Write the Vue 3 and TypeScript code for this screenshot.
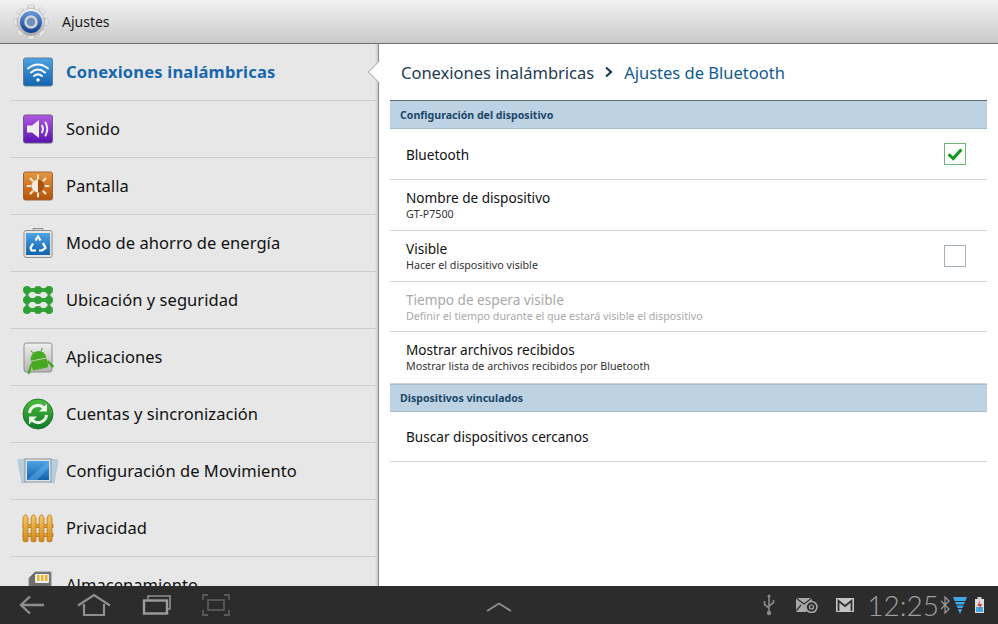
<script setup lang="ts">
const menuItems = [
  { label: "Conexiones inalámbricas", icon: "wifi" },
  { label: "Sonido", icon: "sound" },
  { label: "Pantalla", icon: "display" },
  { label: "Modo de ahorro de energía", icon: "power" },
  { label: "Ubicación y seguridad", icon: "location" },
  { label: "Aplicaciones", icon: "apps" },
  { label: "Cuentas y sincronización", icon: "sync" },
  { label: "Configuración de Movimiento", icon: "motion" },
  { label: "Privacidad", icon: "privacy" },
  { label: "Almacenamiento", icon: "storage" }
];

const deviceRows = [
  { title: "Bluetooth", check: "on", mod: "row--single" },
  { title: "Nombre de dispositivo", sub: "GT-P7500" },
  { title: "Visible", sub: "Hacer el dispositivo visible", check: "off" },
  { title: "Tiempo de espera visible", sub: "Definir el tiempo durante el que estará visible el dispositivo", disabled: true, mod: "row--tight" },
  { title: "Mostrar archivos recibidos", sub: "Mostrar lista de archivos recibidos por Bluetooth", mod: "row--tall" }
];
</script>

<template>
  <div class="screen">
    <header class="title-bar">
      <svg class="gear" viewBox="0 0 36 36" width="36" height="36">
        <defs>
          <linearGradient id="gearMetal" x1="0" y1="0" x2="0" y2="1">
            <stop offset="0" stop-color="#f8f8f8" />
            <stop offset="1" stop-color="#a8a8a8" />
          </linearGradient>
          <linearGradient id="gearBlue" x1="0" y1="0" x2="0" y2="1">
            <stop offset="0" stop-color="#6a9ade" />
            <stop offset="1" stop-color="#123f8e" />
          </linearGradient>
        </defs>
        <g fill="url(#gearMetal)" stroke="#a8a8a8" stroke-width="0.5">
          <rect v-for="a in [0, 45, 90, 135, 180, 225, 270, 315]" :key="a" x="14.500" y="1" width="7" height="7" rx="1" :transform="`rotate(${a} 18 18)`" />
          <circle cx="18" cy="18" r="13.500" />
        </g>
        <circle cx="18" cy="18" r="11" fill="url(#gearBlue)" />
        <circle cx="18" cy="18" r="5.500" fill="#6f8fbc" stroke="#d2d2d2" stroke-width="2.600" />
      </svg>
      <span class="title-text">Ajustes</span>
    </header>

    <main class="content">
      <nav class="sidebar">
        <div v-for="(item, i) in menuItems" :key="item.label" class="menu-row" :class="{ 'menu-row--active': i === 0 }">
          <span class="menu-icon">
            <svg viewBox="0 0 32 32" width="32" height="32">
              <defs>
                <linearGradient id="gBlue" x1="0" y1="0" x2="0" y2="1"><stop offset="0" stop-color="#4ea3e3" /><stop offset="1" stop-color="#1463ad" /></linearGradient>
                <linearGradient id="gPurple" x1="0" y1="0" x2="0" y2="1"><stop offset="0" stop-color="#b05ae0" /><stop offset="1" stop-color="#5a12b0" /></linearGradient>
                <linearGradient id="gOrange" x1="0" y1="0" x2="0" y2="1"><stop offset="0" stop-color="#e8973f" /><stop offset="1" stop-color="#b4520c" /></linearGradient>
                <linearGradient id="gGreen" x1="0" y1="0" x2="0" y2="1"><stop offset="0" stop-color="#4dbb3c" /><stop offset="1" stop-color="#107a28" /></linearGradient>
                <linearGradient id="gGray" x1="0" y1="0" x2="0" y2="1"><stop offset="0" stop-color="#f0f0f0" /><stop offset="1" stop-color="#b4b4b4" /></linearGradient>
                <linearGradient id="gGold" x1="0" y1="0" x2="0" y2="1"><stop offset="0" stop-color="#f5c964" /><stop offset="1" stop-color="#d58a1c" /></linearGradient>
              </defs>

              <g v-if="item.icon === 'wifi'">
                <rect x="1.500" y="2" width="29" height="28" rx="2" fill="url(#gBlue)" stroke="#5d7f9c" />
                <g fill="none" stroke="#fff" stroke-width="2" stroke-linecap="round">
                  <path d="M6 12.500Q16 4.500 26 12.500" />
                  <path d="M9 16.500Q16 10.500 23 16.500" />
                  <path d="M12 20Q16 16.800 20 20" />
                </g>
                <circle cx="16" cy="24" r="1.700" fill="#fff" />
              </g>

              <g v-else-if="item.icon === 'sound'">
                <rect x="1.500" y="2" width="29" height="28" rx="2" fill="url(#gPurple)" stroke="#6f5a8c" />
                <path d="M5 12.500h5L17 7v18l-7-5.500H5z" fill="#eee" />
                <g fill="none" stroke="#eee" stroke-width="2" stroke-linecap="round">
                  <path d="M20 12.500q2 3.500 0 7" />
                  <path d="M23.500 9.500q3.500 6.500 0 13" />
                </g>
              </g>

              <g v-else-if="item.icon === 'display'">
                <rect x="1.500" y="2" width="29" height="28" rx="2" fill="url(#gOrange)" stroke="#94643a" />
                <g stroke="#f4eadc" stroke-width="2" stroke-linecap="round">
                  <path d="M16 5.500v3M16 23.500v3M5.500 16h3M23.500 16h3M8.500 8.500l2.200 2.200M21.300 21.300l2.200 2.200M23.500 8.500l-2.200 2.200M10.700 21.300l-2.200 2.200" />
                </g>
                <circle cx="16" cy="16" r="6.500" fill="#f4eadc" />
                <path d="M16 9.500a6.500 6.500 0 0 1 0 13z" fill="#a8520f" />
              </g>

              <g v-else-if="item.icon === 'power'">
                <path d="M11 3.500V1.500h10v2" fill="#d8d8d8" stroke="#8f8f8f" />
                <rect x="2" y="3.500" width="28" height="27" rx="2" fill="#e4e4e4" stroke="#8f8f8f" />
                <rect x="4" y="6" width="24" height="22" fill="url(#gBlue)" />
                <g fill="none" stroke="#fff" stroke-width="2.200">
                  <path d="M13.500 13.500 16 9.500l2.500 4" />
                  <path d="M21 16l2.500 5-3.500 2.500h-3" />
                  <path d="M14 23.500H9.500l-1-2.500 2.500-4.500" />
                </g>
              </g>

              <g v-else-if="item.icon === 'location'" fill="#2f9e35">
                <g fill="none" stroke="#37a53b" stroke-width="4">
                  <path d="M5 6h22M5 16h22M5 26h22" />
                  <path d="M5 6v20M27 6v20" stroke-width="3" />
                </g>
                <g v-for="y in [6, 16, 26]" :key="y">
                  <circle cx="5" :cy="y" r="4" />
                  <circle cx="16" :cy="y" r="4" />
                  <circle cx="27" :cy="y" r="4" />
                </g>
              </g>

              <g v-else-if="item.icon === 'apps'">
                <rect x="2" y="2" width="28" height="29" rx="2.500" fill="url(#gGray)" stroke="#8d8d8d" />
                <g fill="#47a822" transform="rotate(-12 17 20)">
                  <path d="M9 18a8 8 0 0 1 16 0z" />
                  <rect x="9" y="19" width="16" height="9" rx="1.500" />
                  <path d="M3 30l5-9 1.500 1.500-4 8zM31 28l-5-7-1.500 1.500 4 7z" />
                  <path d="M13 11l-2-3M21 11l2-3" stroke="#47a822" />
                </g>
              </g>

              <g v-else-if="item.icon === 'sync'">
                <circle cx="16" cy="16" r="15" fill="url(#gGreen)" stroke="#0f6a22" stroke-width="0.800" />
                <g fill="none" stroke="#eef8ea" stroke-width="3">
                  <path d="M7.500 15A8.500 8.500 0 0 1 22 10" />
                  <path d="M24.500 17A8.500 8.500 0 0 1 10 22" />
                </g>
                <path d="M25 5.500v8h-8zM7 26.500v-8h8z" fill="#eef8ea" />
              </g>

              <g v-else-if="item.icon === 'motion'">
                <path d="M-4 5l9-1v23l-5 1zM36 5l-9-1v23l5 1z" fill="#b8cde0" stroke="#9aaec0" stroke-width="0.500" />
                <rect x="3" y="4" width="26" height="23" fill="#dfe3e6" stroke="#8b9197" />
                <rect x="5" y="6" width="22" height="19" fill="url(#gBlue)" />
                <path d="M5 25 27 6v6L15 25z" fill="#5fb4ee" opacity="0.500" />
              </g>

              <g v-else-if="item.icon === 'privacy'">
                <g fill="url(#gGold)" stroke="#b5771a" stroke-width="0.800">
                  <rect x="1" y="12.500" width="30" height="3" />
                  <rect x="1" y="21.500" width="30" height="3" />
                  <path v-for="x in [0.500, 8.500, 16.500, 24.500]" :key="x" :d="`M${x + 0.500} 6q2.500-7 5 0v23q-2.500 2-5 0z`" />
                </g>
              </g>

              <g v-else-if="item.icon === 'storage'">
                <path d="M7 9l6-6h16v30H4V20l3-2z" fill="#6f6f6f" stroke="#8a8a8a" />
                <rect x="13" y="5" width="14" height="9" rx="1" fill="#eee" />
                <g fill="#e8b628"><rect x="15" y="6" width="2.500" height="6" /><rect x="19" y="6" width="2.500" height="6" /><rect x="23" y="6" width="2.500" height="6" /></g>
              </g>
            </svg>
          </span>
          <span class="menu-label">{{ item.label }}</span>
        </div>
      </nav>

      <section class="detail">
        <span class="notch" />
        <div class="crumbs">
          <span>Conexiones inalámbricas</span>
          <svg class="crumb-sep" viewBox="0 0 10 12" width="10" height="12">
            <path d="M2 1.500 7 6l-5 4.500" fill="none" stroke="#1d3c52" stroke-width="2.200" />
          </svg>
          <span class="crumb-current">Ajustes de Bluetooth</span>
        </div>

        <div class="section-head">Configuración del dispositivo</div>
        <div v-for="row in deviceRows" :key="row.title" class="row" :class="[row.mod, { 'row--disabled': row.disabled }]">
          <div class="row-text">
            <div class="row-title">{{ row.title }}</div>
            <div v-if="row.sub" class="row-sub">{{ row.sub }}</div>
          </div>
          <span v-if="row.check" class="check" :class="{ 'check--on': row.check === 'on' }">
            <svg v-if="row.check === 'on'" viewBox="0 0 22 22" width="20" height="20">
              <path d="M4 11.500 9 16l9-10" fill="none" stroke="#109a22" stroke-width="3.400" />
            </svg>
          </span>
        </div>

        <div class="section-head section-head--second">Dispositivos vinculados</div>
        <div class="row row--last">
          <div class="row-text">
            <div class="row-title">Buscar dispositivos cercanos</div>
          </div>
        </div>
      </section>
    </main>

    <footer class="system-bar">
      <div class="nav-keys">
        <svg viewBox="0 0 28 22" width="28" height="22">
          <path d="M26 11H4M12 2.500 3 11l9 8.500" fill="none" stroke="#8f8f8f" stroke-width="2.400" />
        </svg>
        <svg viewBox="0 0 36 24" width="36" height="24">
          <path d="M2 12.500 18 2l16 10.500M8 11v11h20V11" fill="none" stroke="#8f8f8f" stroke-width="2.200" />
        </svg>
        <svg viewBox="0 0 30 22" width="30" height="22">
          <path d="M6 5V2h22v13h-3" fill="none" stroke="#8f8f8f" stroke-width="1.600" />
          <rect x="2" y="6.500" width="23" height="13" fill="none" stroke="#9c9c9c" stroke-width="2.400" />
        </svg>
        <svg viewBox="0 0 28 22" width="28" height="22">
          <path d="M1 6V1h5M22 1h5v5M27 16v5h-5M6 21H1v-5" fill="none" stroke="#5a5a5a" stroke-width="1.800" />
          <rect x="6" y="6" width="16" height="10" fill="none" stroke="#5a5a5a" stroke-width="1.800" />
        </svg>
      </div>
      <svg class="up-chevron" viewBox="0 0 26 10" width="26" height="10">
        <path d="M1 9 13 1.500 25 9" fill="none" stroke="#8f8f8f" stroke-width="1.800" />
      </svg>
      <div class="status">
        <svg class="st-usb" viewBox="0 0 14 22" width="14" height="22">
          <path d="M7 2v17M2.500 7v3.500L7 14M11.500 6v2.500L7 12" fill="none" stroke="#8a8a8a" stroke-width="1.600" />
          <circle cx="7" cy="19" r="2.200" fill="#8a8a8a" />
          <path d="M7 0 9 3H5z" fill="#8a8a8a" />
        </svg>
        <svg class="st-mail" viewBox="0 0 22 16" width="22" height="16">
          <path d="M0 1h16v8l-6 6H0z" fill="#a8a8a8" />
          <path d="M0 1l8 6 8-6M0 14l5-6" fill="none" stroke="#2f2f2f" stroke-width="1.200" />
          <circle cx="15.500" cy="10" r="5.500" fill="#2f2f2f" stroke="#a8a8a8" stroke-width="1.500" />
          <circle cx="15.500" cy="10" r="2" fill="none" stroke="#a8a8a8" stroke-width="1.200" />
        </svg>
        <svg class="st-gmail" viewBox="0 0 18 14" width="18" height="14">
          <rect width="18" height="14" fill="#c4c4c4" />
          <path d="M2.500 13V2.800L9 8l6.500-5.200V13" fill="none" stroke="#2f2f2f" stroke-width="1.800" />
        </svg>
        <span class="clock">12:25</span>
        <svg class="st-bt" viewBox="0 0 10 18" width="10" height="18">
          <path d="M1 5l8 8-4 4V1l4 4-8 8" fill="none" stroke="#9a9a9a" stroke-width="1.200" />
        </svg>
        <svg class="st-wifi" viewBox="0 0 14 17" width="14" height="17">
          <path d="M0 0h14L7 17z" fill="#3fa9e8" />
          <path d="M0 4.500h14M0 8h14M0 11.500h14" stroke="#2c2c2c" stroke-width="1.200" />
        </svg>
        <svg class="st-batt" viewBox="0 0 9 16" width="9" height="16">
          <rect x="2.500" y="0" width="4" height="2" fill="#cfcfcf" />
          <rect x="0" y="2" width="9" height="14" fill="#dcdcdc" />
          <rect x="1" y="10" width="7" height="5" fill="#3fa9e8" />
          <path d="M5 3 2.500 9H5l-1 5 3-7H4.500z" fill="#d63a2f" />
        </svg>
      </div>
    </footer>
  </div>
</template>

<style>
body {
  margin: 0;
  overflow: hidden;
}
</style>

<style scoped>
.screen {
  width: 998px;
  height: 624px;
  display: flex;
  flex-direction: column;
  overflow: hidden;
  font-family: "Noto Sans", "Open Sans", sans-serif;
  color: #111;
  background: #fff;
}

.title-bar {
  height: 44px;
  flex: none;
  display: flex;
  align-items: center;
  gap: 13px;
  padding-left: 13px;
  box-sizing: border-box;
  background: linear-gradient(#f2f2f2, #c9c9c9);
  border-bottom: 1px solid #6f6f6f;
}

.title-text {
  font-size: 14px;
  color: #1a1a1a;
}

.content {
  flex: 1;
  min-height: 0;
  display: flex;
}

.sidebar {
  width: 379px;
  flex: none;
  padding-left: 11px;
  box-sizing: border-box;
  overflow: hidden;
  background: #e7e7e7;
  border-right: 1px solid #8a8a8a;
  box-shadow: inset -3px 0 3px -2px rgba(0, 0, 0, 0.18);
}

.menu-row {
  height: 57px;
  display: flex;
  align-items: center;
  box-sizing: border-box;
  border-bottom: 1px solid #cdcdcd;
}

.menu-icon {
  width: 32px;
  height: 32px;
  margin-left: 11px;
  margin-right: 12px;
  flex: none;
  display: flex;
}

.menu-icon svg {
  overflow: visible;
}

.menu-label {
  font-size: 16.500px;
  letter-spacing: 0.05px;
  white-space: nowrap;
  padding-bottom: 2px;
}

.menu-row--active .menu-label {
  color: #1767ae;
  font-weight: 700;
  letter-spacing: 0.2px;
}

.detail {
  position: relative;
  flex: 1;
  min-width: 0;
  padding: 0 11px;
  background: #fff;
}

.notch {
  position: absolute;
  left: -8px;
  top: 20px;
  width: 16px;
  height: 16px;
  background: #fff;
  border-left: 1px solid #b5b5b5;
  border-bottom: 1px solid #b5b5b5;
  transform: rotate(45deg);
  box-sizing: border-box;
}

.crumbs {
  height: 56px;
  display: flex;
  align-items: center;
  gap: 10px;
  padding-left: 11px;
  font-size: 16.500px;
  color: #1d3c52;
  white-space: nowrap;
}

.crumb-current {
  color: #0f5b8f;
}

.section-head {
  height: 29px;
  display: flex;
  align-items: center;
  padding-left: 10px;
  box-sizing: border-box;
  background: #bdd2e2;
  border-top: 1px solid #5c6a75;
  border-bottom: 1px solid #a9bccb;
  font-size: 10.600px;
  font-weight: 700;
  color: #1b4769;
}

.section-head--second {
  height: 28px;
  border-top-color: #a9bccb;
}

.row {
  height: 51px;
  display: flex;
  align-items: center;
  justify-content: space-between;
  padding: 0 21px 0 16px;
  box-sizing: border-box;
  border-bottom: 1px solid #d4d4d4;
}

.row--last,
.row--tight {
  height: 50px;
}

.row--tall {
  height: 52px;
  padding-bottom: 2px;
}

.row--single .row-text {
  padding-top: 2px;
}

.row-title {
  font-size: 13.600px;
  line-height: 18px;
  color: #111;
}

.row-sub {
  font-size: 10.700px;
  line-height: 14px;
  color: #333;
}

.row--disabled .row-title,
.row--disabled .row-sub {
  color: #a9a9a9;
}

.check {
  width: 22px;
  height: 22px;
  box-sizing: border-box;
  display: flex;
  align-items: center;
  justify-content: center;
  background: #fff;
  border: 1.500px solid #a5b0bc;
}

.check--on {
  border-color: #6db577;
}

.system-bar {
  height: 38px;
  flex: none;
  position: relative;
  display: flex;
  align-items: center;
  justify-content: space-between;
  background: #2c2c2c;
}

.nav-keys {
  display: flex;
  align-items: center;
  gap: 30px;
  padding-left: 18px;
}

.up-chevron {
  position: absolute;
  left: 486px;
  top: 16px;
}

.status {
  display: flex;
  align-items: center;
  padding-right: 14px;
}

.st-mail {
  margin-left: 20px;
}

.st-gmail {
  margin-left: 18px;
}

.clock {
  margin-left: 13px;
  margin-right: 1px;
  font-family: Lato, "Noto Sans", sans-serif;
  font-weight: 300;
  font-size: 28px;
  line-height: 38px;
  color: #a0a0a0;
  opacity: 0.99;
}

.st-wifi {
  margin-left: 3px;
}

.st-batt {
  margin-left: 8px;
}
</style>
